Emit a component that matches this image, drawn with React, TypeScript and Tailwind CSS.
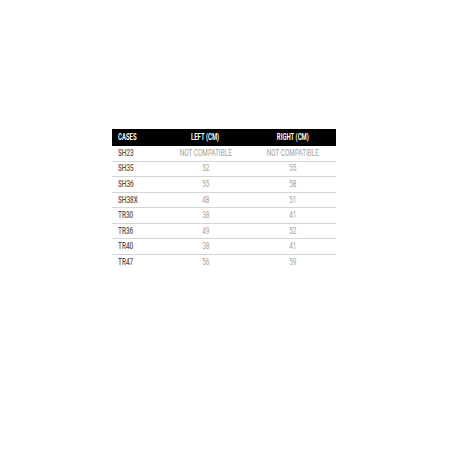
import React from "react";

const rows: [string, string, string][] = [
  ["SH23", "NOT COMPATIBLE", "NOT COMPATIBLE"],
  ["SH35", "52", "55"],
  ["SH36", "55", "58"],
  ["SH38X", "48", "51"],
  ["TR30", "38", "41"],
  ["TR36", "49", "52"],
  ["TR40", "38", "41"],
  ["TR47", "56", "59"],
];

export default function App() {
  return (
    <div className="w-[452px] h-[452px] bg-white pt-[129px] pl-[112px]" style={{ fontFamily: "Roboto, 'Liberation Sans', sans-serif" }}>
      <div className="w-[224px]">
        <div className="flex h-[17px] items-center bg-black text-white text-[8.5px] font-bold">
          <div className="w-[50px] pl-[6px]">
            <span className="inline-block scale-x-[0.7] origin-left">CASES</span>
          </div>
          <div className="w-[87px] text-center">
            <span className="inline-block scale-x-[0.7]">LEFT (CM)</span>
          </div>
          <div className="w-[87px] text-center">
            <span className="inline-block scale-x-[0.7]">RIGHT (CM)</span>
          </div>
        </div>
        {rows.map((r, i) => (
          <div
            key={r[0]}
            className={`flex h-[15.55px] items-center text-[8.5px] box-border ${i < rows.length - 1 ? "border-b border-[#d4d4d4]" : ""}`}
          >
            <div className="w-[50px] pl-[6px] font-medium text-[#555555]">
              <span className="inline-block scale-x-[0.75] origin-left">{r[0]}</span>
            </div>
            <div className="w-[87px] text-center text-[#a0a0a0]">
              <span className="inline-block scale-x-[0.75]">{r[1]}</span>
            </div>
            <div className="w-[87px] text-center text-[#a0a0a0]">
              <span className="inline-block scale-x-[0.75]">{r[2]}</span>
            </div>
          </div>
        ))}
      </div>
    </div>
  );
}
